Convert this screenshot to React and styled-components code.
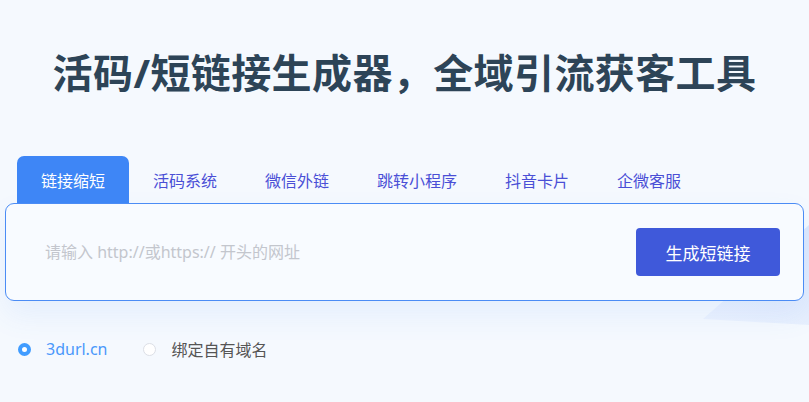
import React, { useState } from 'react';
import styled, { createGlobalStyle } from 'styled-components';

const Global = createGlobalStyle`
  html, body {
    margin: 0;
    padding: 0;
    background: #f5f9fe;
    font-family: "Noto Sans", "Noto Sans CJK SC", sans-serif;
  }
`;

const Page = styled.div`
  position: relative;
  width: 809px;
  height: 402px;
  overflow: hidden;
  background: #f5f9fe;

  &::before {
    content: '';
    position: absolute;
    right: 0;
    top: 225px;
    width: 106px;
    height: 100px;
    background: linear-gradient(200deg, #dce8fc 0%, #e5eefd 60%, #edf3fe 100%);
    clip-path: polygon(100% 0, 100% 100%, 0 94%);
  }
`;

const Title = styled.h1`
  margin: 0;
  padding-top: 44px;
  text-align: center;
  font-size: 40px;
  font-weight: 700;
  line-height: 58px;
  color: #2d4457;
  letter-spacing: 0.4px;
`;

const Panel = styled.div`
  position: relative;
  margin-top: 54px;
  padding: 0 5px;
`;

const Tabs = styled.div`
  display: flex;
  padding-left: 12px;
`;

const Tab = styled.div`
  height: 47px;
  padding: 0 24px;
  display: flex;
  align-items: center;
  font-size: 16px;
  border-radius: 7px 7px 0 0;
  color: ${p => (p.$active ? '#fff' : '#4a4fd6')};
  background: ${p => (p.$active ? '#3e86f6' : 'transparent')};
  cursor: pointer;
`;

const Box = styled.div`
  height: 96px;
  border: 1px solid #4b8cf5;
  border-radius: 9px;
  background: #f8fbff;
  display: flex;
  align-items: center;
  justify-content: space-between;
  padding: 0 23px 0 39px;
  box-shadow: 0 14px 30px rgba(70, 130, 240, 0.09);
`;

const Input = styled.input`
  flex: 1;
  padding: 0;
  border: none;
  outline: none;
  background: transparent;
  font-family: inherit;
  font-size: 16px;
  color: #333;

  &::placeholder {
    color: #c3c6cd;
  }
`;

const Button = styled.button`
  width: 144px;
  height: 48px;
  border: none;
  border-radius: 4px;
  background: #3f59da;
  color: #fff;
  font-family: inherit;
  font-size: 17px;
  cursor: pointer;
`;

const Options = styled.div`
  display: flex;
  align-items: center;
  gap: 36px;
  padding: 36px 0 0 18px;
`;

const Option = styled.label`
  display: flex;
  align-items: center;
  gap: 15px;
  font-size: 16px;
  color: ${p => (p.$checked ? '#4a98fb' : '#555')};
  cursor: pointer;
`;

const Dot = styled.span`
  width: 13px;
  height: 13px;
  border-radius: 50%;
  box-sizing: border-box;
  border: ${p => (p.$checked ? '4px solid #409cff' : '1px solid #dcdfe6')};
  background: #fff;
`;

const tabs = ['链接缩短', '活码系统', '微信外链', '跳转小程序', '抖音卡片', '企微客服'];

export default function App() {
  const [active, setActive] = useState(0);
  const [domain, setDomain] = useState(0);
  return (
    <>
      <Global />
      <Page>
        <Title>活码/短链接生成器，全域引流获客工具</Title>
        <Panel>
          <Tabs>
            {tabs.map((t, i) => (
              <Tab key={t} $active={i === active} onClick={() => setActive(i)}>{t}</Tab>
            ))}
          </Tabs>
          <Box>
            <Input placeholder="请输入 http://或https:// 开头的网址" />
            <Button>生成短链接</Button>
          </Box>
        </Panel>
        <Options>
          <Option $checked={domain === 0} onClick={() => setDomain(0)}>
            <Dot $checked={domain === 0} />3durl.cn
          </Option>
          <Option $checked={domain === 1} onClick={() => setDomain(1)}>
            <Dot $checked={domain === 1} />绑定自有域名
          </Option>
        </Options>
      </Page>
    </>
  );
}
